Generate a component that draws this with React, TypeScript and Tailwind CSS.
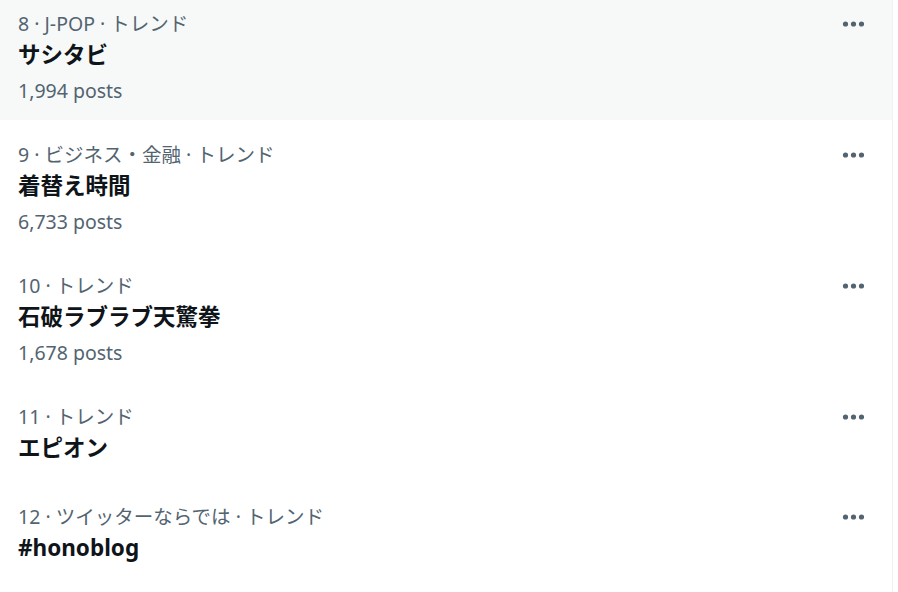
import React from 'react';

type Trend = {
  rank: number;
  category: string;
  title: string;
  posts?: string;
};

const TRENDS: Trend[] = [
  { rank: 8, category: 'J-POP · トレンド', title: 'サシタビ', posts: '1,994 posts' },
  { rank: 9, category: 'ビジネス・金融 · トレンド', title: '着替え時間', posts: '6,733 posts' },
  { rank: 10, category: 'トレンド', title: '石破ラブラブ天驚拳', posts: '1,678 posts' },
  { rank: 11, category: 'トレンド', title: 'エピオン' },
  { rank: 12, category: 'ツイッターならでは · トレンド', title: '#honoblog' },
];

function MoreIcon() {
  return (
    <svg width="22" height="22" viewBox="0 0 22 22" aria-hidden="true">
      <circle cx="3.5" cy="11" r="2.6" fill="#536471" />
      <circle cx="11.5" cy="11" r="2.6" fill="#536471" />
      <circle cx="19.5" cy="11" r="2.6" fill="#536471" />
    </svg>
  );
}

function TrendRow({ trend, hovered }: { trend: Trend; hovered?: boolean }) {
  return (
    <div
      className={`flex items-start justify-between pl-[18px] pr-[28px] pt-[23px] ${trend.posts ? 'pb-[17px]' : 'pb-[15px]'} ${hovered ? 'bg-[#f7f9f9]' : ''}`}
    >
      <div className="min-w-0">
        <div className="text-[19.5px] leading-[24px] text-[#536471]">
          {trend.rank} · {trend.category}
        </div>
        <div className="text-[22.5px] leading-[38px] font-bold text-[#0f1419]">{trend.title}</div>
        {trend.posts && (
          <div className="mt-[5px] text-[19.5px] leading-[24px] text-[#536471]">{trend.posts}</div>
        )}
      </div>
      <div className="shrink-0 mt-[1px]">
        <MoreIcon />
      </div>
    </div>
  );
}

export default function App() {
  return (
    <div
      className="w-[898px] h-[592px] overflow-hidden bg-white"
      style={{ fontFamily: '"Segoe UI", "Noto Sans", "Noto Sans CJK JP", sans-serif' }}
    >
      <div className="flex flex-col w-[893px] h-full border-r border-[#eff3f4]">
        <div className="-mt-[11px]">
          {TRENDS.map((t, i) => (
            <TrendRow key={t.rank} trend={t} hovered={i === 0} />
          ))}
        </div>
      </div>
    </div>
  );
}
